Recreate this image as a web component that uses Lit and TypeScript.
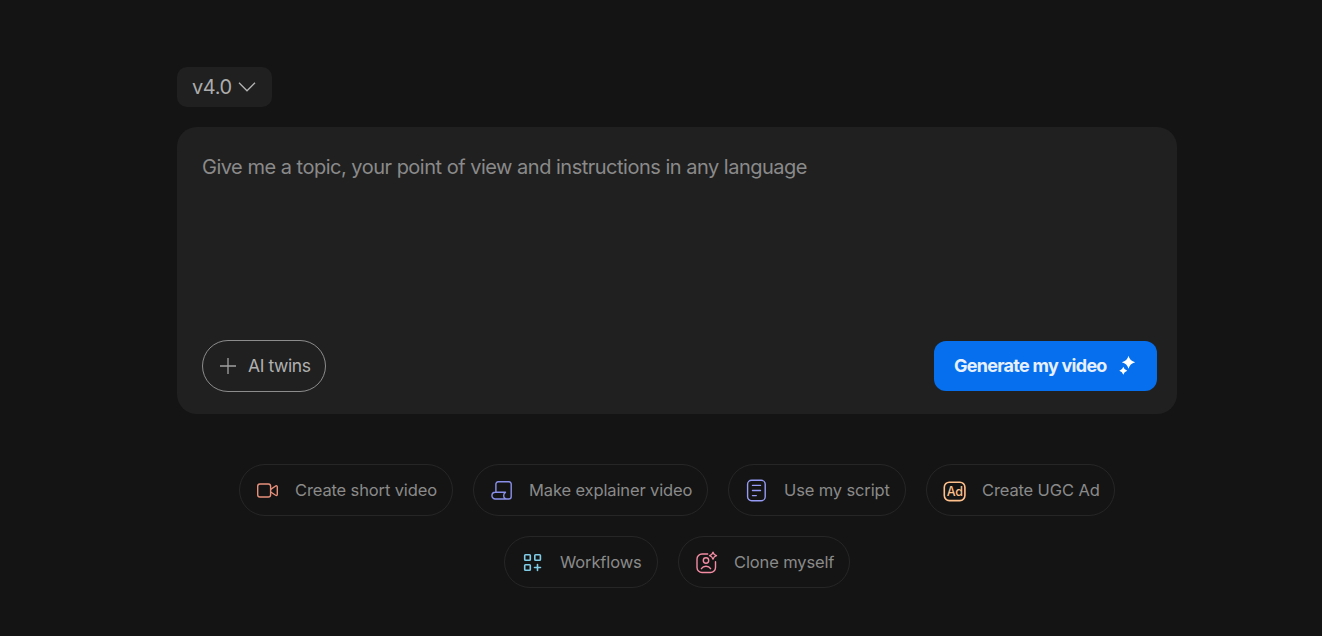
import { LitElement, html, css, svg } from "lit";

const icon = (color: string, body: unknown) => html`<svg width="24" height="24" viewBox="0 0 24 24" fill="none" stroke=${color} stroke-width="1.4" stroke-linecap="round" stroke-linejoin="round">${body}</svg>`;

const chips = [
  { label: "Create short video", width: 214, icon: icon("#e8907c", svg`<rect x="2.700" y="6" width="12.900" height="13" rx="2.200"/><path d="M15.700 11.400L20.300 8.200Q22.300 7 22.300 9v7.200Q22.300 18.200 20.300 17L15.700 14"/>`) },
  { label: "Make explainer video", width: 235, icon: icon("#8a90ea", svg`<path d="M6.900 14.300V6a2.200 2.200 0 0 1 2.200-2.200H20A2.200 2.200 0 0 1 22.200 6v12.400a2.600 2.600 0 0 1-2.600 2.600H6.300a3.350 3.350 0 0 1 0-6.700h10.200c-1.200.6-1.800 1.800-1.800 3.200 0 2 1.400 3.500 3.200 3.500"/>`) },
  { label: "Use my script", width: 178, icon: icon("#969cf5", svg`<rect x="3.600" y="2.300" width="17.600" height="20.400" rx="4"/><path d="M8.500 7.400h8M8.500 12.500h8M8.500 17.600h3.800"/>`) },
  { label: "Create UGC Ad", width: 189, icon: icon("#ffc08c", svg`<rect x="2.300" y="4.200" width="20.600" height="18.400" rx="5" stroke-width="1.600"/><text class="ad" x="12.700" y="18.200" text-anchor="middle">Ad</text>`) },
  { label: "Workflows", width: 154, icon: icon("#80cbe6", svg`<g stroke-width="1.600"><rect x="4.700" y="4.700" width="5.600" height="5.600" rx=".8"/><rect x="14.800" y="4.700" width="5.600" height="5.600" rx=".8"/><rect x="4.700" y="14.700" width="5.600" height="5.600" rx=".8"/><path d="M17.500 14.500v6M14.500 17.500h6"/></g>`) },
  { label: "Clone myself", width: 172, icon: icon("#f48ca4", svg`<path d="M13.700 4H8a5 5 0 0 0-5 5v8.500a5 5 0 0 0 5 5h8.500a5 5 0 0 0 5-5V11.700"/><circle cx="12" cy="10.500" r="2.700"/><path d="M7.400 18.700c1-1.600 2.600-2.400 4.600-2.400s3.600.8 4.600 2.400"/><path stroke-width="1.300" d="M19 2.200q.8 2.700 3.500 3.500-2.700.8-3.500 3.500-.8-2.700-3.500-3.500 2.700-.8 3.500-3.500z"/>`) },
];

class AppRoot extends LitElement {
  static styles = css`
    :host { display: block; height: 636px; background: #141414; font-family: Inter, sans-serif; color: #8a8a8a; }
    * { box-sizing: border-box; }
    svg { display: block; flex: none; }
    .page { width: 1000px; margin-left: 177px; padding-top: 67px; }
    .version { width: 95px; height: 40px; border-radius: 10px; background: #202020; display: flex; align-items: center; justify-content: space-between; padding: 0 16px 0 15px; font-size: 20px; letter-spacing: -0.4px; color: #acacac; }
    .prompt { margin-top: 20px; height: 287px; border-radius: 20px; background: #202020; padding: 25px 20px 22px 25px; display: flex; flex-direction: column; justify-content: space-between; }
    .placeholder { font-size: 20px; line-height: 30px; letter-spacing: -0.5px; }
    .bar { display: flex; justify-content: space-between; align-items: center; }
    .twins { width: 124px; height: 52px; border: 1px solid #8c8c8c; border-radius: 26px; display: flex; align-items: center; gap: 11px; padding-left: 16px; font-size: 17.5px; line-height: 24px; letter-spacing: -0.4px; color: #b0b0b0; }
    .go { width: 223px; height: 50px; border-radius: 12px; background: #056fee; color: #e6f0ff; display: flex; align-items: center; justify-content: space-between; padding: 0 21px 0 20px; font-size: 18px; font-weight: 700; letter-spacing: -0.73px; }
    .lift { padding-bottom: 1px; }
    .chips { margin-top: 50px; display: flex; flex-wrap: wrap; gap: 20px; justify-content: center; }
    .chip { height: 52px; border: 1px solid #262626; border-radius: 26px; display: flex; align-items: center; gap: 16px; padding-left: 15px; font-size: 16.5px; letter-spacing: -0.13px; white-space: nowrap; color: #8a8a8a; }
    .ad { font: 500 12.500px Inter, sans-serif; letter-spacing: -0.4px; fill: #ffc08c; stroke: none; }
  `;

  render() {
    return html`<div class="page">
      <div class="version"><span>v4.0</span><svg width="18" height="12" viewBox="0 0 18 12" fill="none" stroke="#b4b4b4" stroke-width="1.300"><path d="M1 1.800L9 9.800L17 1.800"/></svg></div>
      <div class="prompt">
        <div class="placeholder">Give me a topic, your point of view and instructions in any language</div>
        <div class="bar">
          <div class="twins"><svg width="18" height="18" viewBox="0 0 18 18" fill="none" stroke="#a0a0a0" stroke-width="1.300"><path d="M9 1v16M1 9h16"/></svg><span class="lift">AI twins</span></div>
          <div class="go"><span class="lift">Generate my video</span><svg width="18" height="22" viewBox="0 0 18 22" fill="#fff"><path d="M10.500 .8q1.300 5.200 6.700 6.500-5.400 1.300-6.700 6.500-1.300-5.200-6.700-6.500 5.400-1.300 6.700-6.500z"/><path d="M5.300 11.700q.8 3.100 4 4-3.200.9-4 4-.8-3.100-4-4 3.200-.9 4-4z"/></svg></div>
        </div>
      </div>
      <div class="chips">${chips.map((c) => html`<div class="chip" style="width:${c.width}px">${c.icon}<span>${c.label}</span></div>`)}</div>
    </div>`;
  }
}
customElements.define("app-root", AppRoot);
